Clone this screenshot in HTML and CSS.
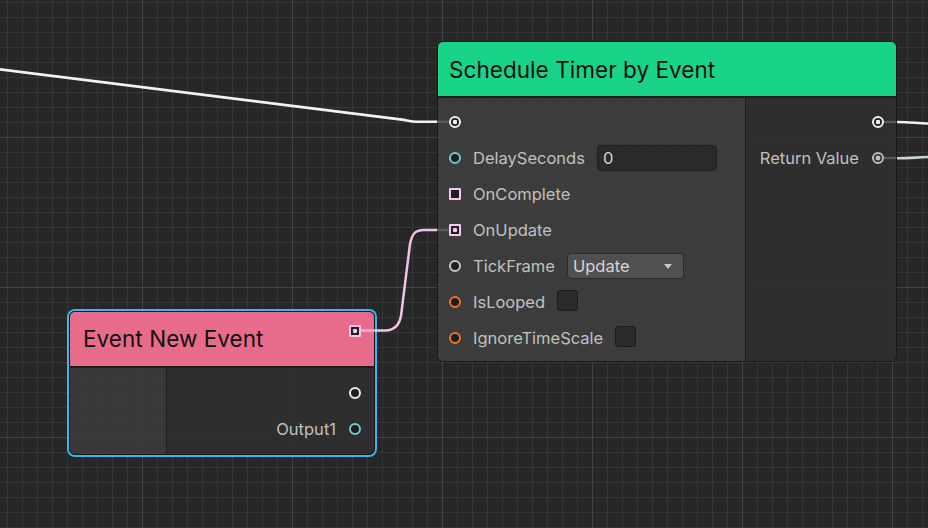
FILE: index.html
```html
<!DOCTYPE html>
<html lang="en">
<head>
<meta charset="utf-8">
<title>Graph</title>
<link rel="stylesheet" href="styles.css">
</head>
<body>
<div class="canvas">
  <div class="node timer">
    <div class="title">Schedule Timer by Event</div>
    <div class="body">
      <div class="inputs">
        <div class="row"><span class="port ring exec-on"></span></div>
        <div class="row"><span class="port ring cyan"></span><span class="label">DelaySeconds</span><span class="field">0</span></div>
        <div class="row"><span class="port square"></span><span class="label">OnComplete</span></div>
        <div class="row"><span class="port square sq-on"></span><span class="label">OnUpdate</span></div>
        <div class="row"><span class="port ring gray"></span><span class="label">TickFrame</span><span class="dropdown"><span>Update</span><i class="arrow"></i></span></div>
        <div class="row"><span class="port ring orange"></span><span class="label">IsLooped</span><span class="check"></span></div>
        <div class="row"><span class="port ring orange"></span><span class="label">IgnoreTimeScale</span><span class="check"></span></div>
      </div>
      <div class="outputs">
        <div class="row out"><span class="port ring exec-on"></span></div>
        <div class="row out"><span class="label">Return Value</span><span class="port ring gray-on"></span></div>
      </div>
    </div>
  </div>

  <div class="node event selected">
    <div class="title pink"><span class="title-text">Event New Event</span><span class="port square sq-on head-port"></span></div>
    <div class="body">
      <div class="side"></div>
      <div class="outputs ev-out">
        <div class="row out"><span class="port ring white"></span></div>
        <div class="row out"><span class="label">Output1</span><span class="port ring cyan"></span></div>
      </div>
    </div>
  </div>

  <svg class="wires" width="928" height="528" viewBox="0 0 928 528">
    <path d="M -5 68.7 L 402 119.6 C 408 120.6 411 121.7 417 121.7 L 437 121.7" stroke="#f2f2f2" stroke-width="2.6" fill="none"/>
    <path d="M 437 121.7 L 449 121.7" stroke="#5a5a5a" stroke-width="2.4"/>
    <path d="M 361 330.5 L 375 330.5" stroke="#f7b3d2" stroke-width="2.4"/>
    <path d="M 375 330.5 L 385 330.5 C 393 330.5 399 326 401 316 L 410 244 C 412 234 415 230 424 230 L 437 230" stroke="#f1c1e8" stroke-width="2.5" fill="none"/>
    <path d="M 437 230 L 449 230" stroke="#5a5a5a" stroke-width="2.4"/>
    <path d="M 884 122 L 896 122" stroke="#5a5a5a" stroke-width="2.4"/>
    <path d="M 897 122 C 910 122 918 123.5 930 123.6" stroke="#f2f2f2" stroke-width="2.6" fill="none"/>
    <path d="M 884 158 L 896 158" stroke="#5a5a5a" stroke-width="2.4"/>
    <path d="M 897 158.2 C 910 158.2 918 157.2 930 157" stroke="#c9d4d4" stroke-width="2.6" fill="none"/>
  </svg>
</div>
</body>
</html>
```
FILE: styles.css
```css
html, body {
  margin: 0;
  padding: 0;
  background: #272727;
}

.canvas {
  position: relative;
  width: 928px;
  height: 528px;
  overflow: hidden;
  background-color: #272727;
  background-image:
    linear-gradient(to right, #434343 0 1px, transparent 1px),
    linear-gradient(to bottom, #434343 0 1px, transparent 1px),
    linear-gradient(to right, #363636 0 1px, transparent 1px),
    linear-gradient(to bottom, #363636 0 1px, transparent 1px);
  background-size: 150px 100%, 100% 150px, 15px 100%, 100% 15px;
  background-position: 142px 0, 0 137px, 7px 0, 0 2px;
  font-family: Inter, "Noto Sans", "DejaVu Sans", sans-serif;
}

.node {
  position: absolute;
  box-sizing: border-box;
  border: 1px solid #181818;
  border-radius: 6px;
  overflow: hidden;
  display: flex;
  flex-direction: column;
}

.timer {
  left: 437px;
  top: 41px;
  width: 460px;
  height: 321px;
}

.event {
  left: 69px;
  top: 311px;
  width: 306px;
  height: 144px;
}

.selected {
  box-shadow: 0 0 0 2px #3bb6ef;
}

.title {
  height: 54px;
  flex: none;
  display: flex;
  align-items: center;
  padding-left: 11px;
  background: #19d389;
  border-bottom: 2px solid #1e1e1e;
  color: #101010;
  font-size: 22.5px;
  letter-spacing: 0.05px;
}

.title.pink {
  background: #e96b8c;
  padding-left: 13px;
  padding-right: 13px;
  align-items: flex-start;
}

.title-text {
  flex: 1;
  line-height: 54px;
}

.head-port {
  margin-top: 13px;
}

.body {
  flex: 1;
  display: flex;
}

.inputs {
  width: 308px;
  flex: none;
  box-sizing: border-box;
  padding: 6px 0 0 11px;
  background: rgba(62, 62, 62, 0.93);
  border-right: 1px solid #1d1d1d;
}

.outputs {
  flex: 1;
  box-sizing: border-box;
  padding: 6px 12px 0 0;
  background: rgba(46, 46, 46, 0.95);
}

.side {
  width: 96px;
  flex: none;
  background: rgba(60, 60, 60, 0.9);
  border-right: 1px solid #222;
}

.ev-out {
  padding: 7px 13px 0 0;
}

.row {
  height: 36px;
  display: flex;
  align-items: center;
}

.row.out {
  justify-content: flex-end;
}

.label {
  color: #c0c0c0;
  font-size: 16.5px;
  margin-left: 12px;
  white-space: nowrap;
}

.out .label {
  margin-left: 0;
  margin-right: 13px;
}

.port {
  flex: none;
  width: 12px;
  height: 12px;
  box-sizing: border-box;
  border: 2px solid #c8c8c8;
  background: #1e1e1e;
}

.ring {
  border-radius: 50%;
}

.exec-on {
  border-color: #f0f0f0;
  background: radial-gradient(circle, #f0f0f0 0 2px, #1e1e1e 2.6px);
}

.white {
  border-color: #ececec;
}

.gray {
  border-color: #c6c6c6;
}

.gray-on {
  border-color: #bdbdbd;
  background: radial-gradient(circle, #bdbdbd 0 2.2px, #2a2a2a 2.8px);
}

.cyan {
  border-color: #6ccbd3;
}

.orange {
  border-color: #f0712d;
}

.square {
  border-radius: 1px;
  border-color: #f6c6ee;
}

.sq-on {
  background: radial-gradient(circle, #f3c8ef 0 2px, #1e1e1e 2.6px);
}

.field {
  margin-left: 12px;
  width: 120px;
  height: 26px;
  box-sizing: border-box;
  background: #2a2a2a;
  border: 1px solid #202020;
  border-radius: 4px;
  color: #d2d2d2;
  font-size: 16.5px;
  line-height: 24px;
  padding-left: 5px;
}

.dropdown {
  margin-left: 12px;
  width: 117px;
  height: 26px;
  box-sizing: border-box;
  background: #505050;
  border: 1px solid #2c2c2c;
  border-radius: 4px;
  color: #d4d4d4;
  font-size: 16.5px;
  line-height: 24px;
  padding: 0 11px 0 5px;
  display: flex;
  justify-content: space-between;
  align-items: center;
}

.arrow {
  width: 0;
  height: 0;
  border-left: 4.5px solid transparent;
  border-right: 4.5px solid transparent;
  border-top: 5px solid #c8c8c8;
}

.check {
  margin-left: 12px;
  margin-bottom: 3px;
  width: 21px;
  height: 21px;
  box-sizing: border-box;
  background: #2b2b2b;
  border: 1px solid #1d1d1d;
  border-radius: 3px;
}

.wires {
  position: absolute;
  left: 0;
  top: 0;
  pointer-events: none;
}
```
